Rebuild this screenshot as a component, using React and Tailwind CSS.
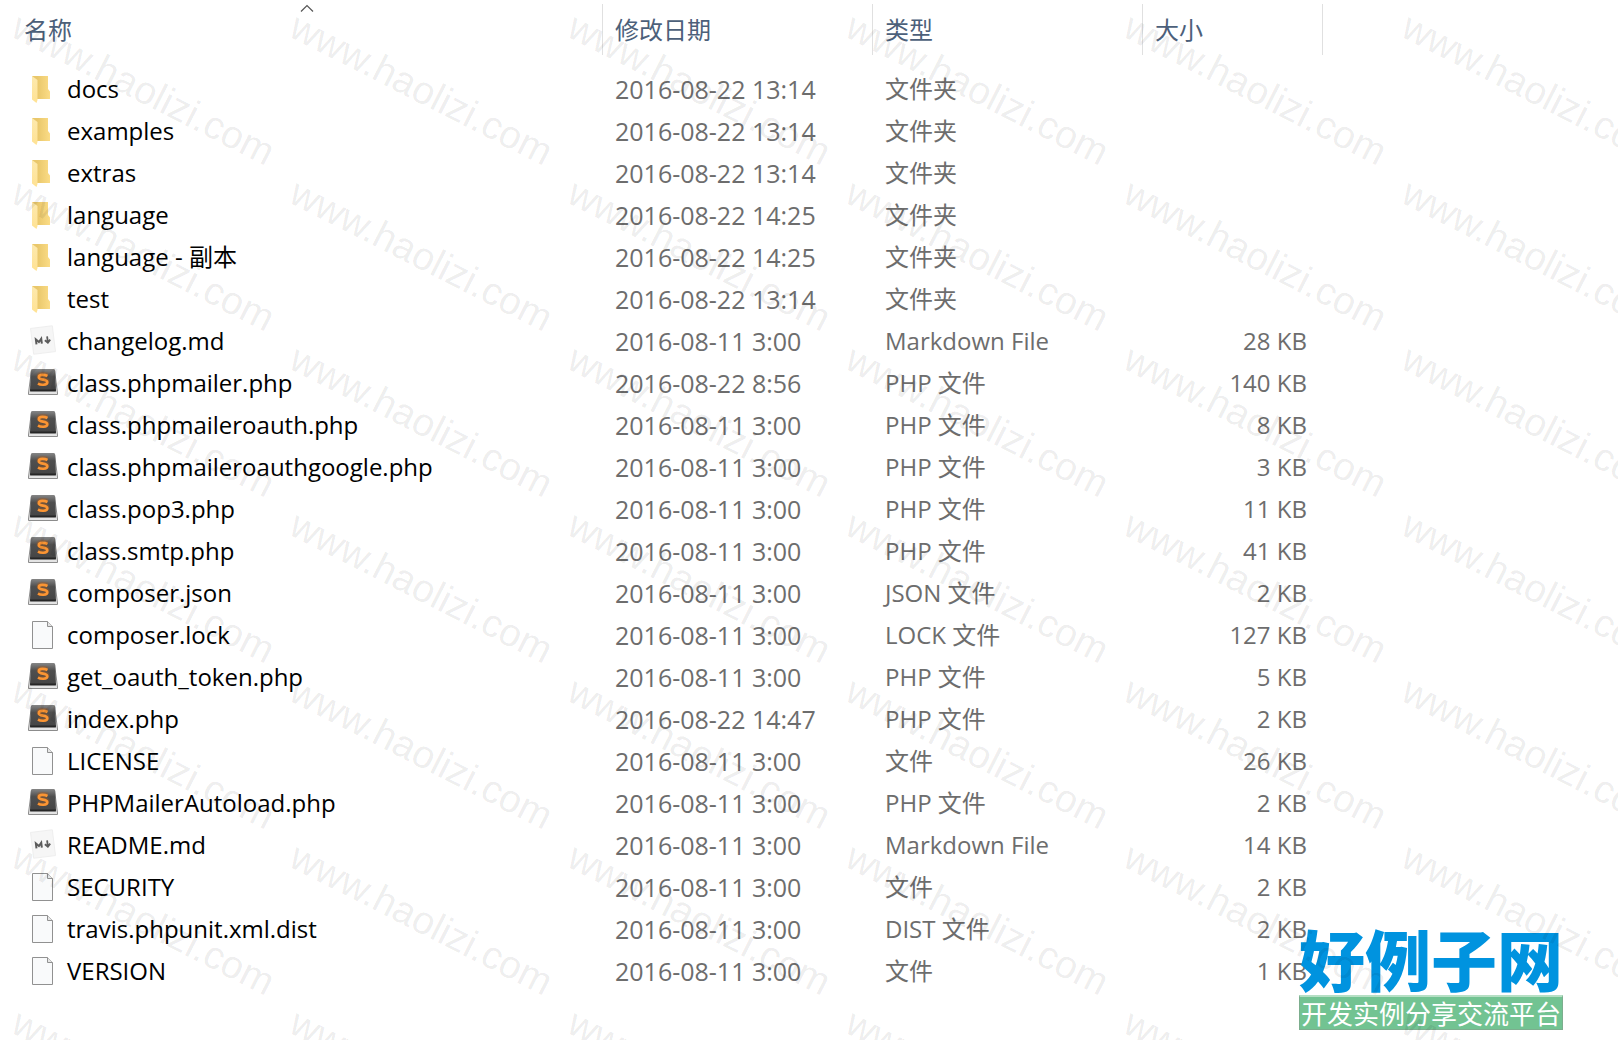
import { clsx } from 'clsx';

const files = [
    { name: 'docs', date: '2016-08-22 13:14', type: '文件夹', size: '', icon: 'folder' },
    { name: 'examples', date: '2016-08-22 13:14', type: '文件夹', size: '', icon: 'folder' },
    { name: 'extras', date: '2016-08-22 13:14', type: '文件夹', size: '', icon: 'folder' },
    { name: 'language', date: '2016-08-22 14:25', type: '文件夹', size: '', icon: 'folder' },
    { name: 'language - 副本', date: '2016-08-22 14:25', type: '文件夹', size: '', icon: 'folder' },
    { name: 'test', date: '2016-08-22 13:14', type: '文件夹', size: '', icon: 'folder' },
    { name: 'changelog.md', date: '2016-08-11 3:00', type: 'Markdown File', size: '28 KB', icon: 'markdown' },
    { name: 'class.phpmailer.php', date: '2016-08-22 8:56', type: 'PHP 文件', size: '140 KB', icon: 'sublime' },
    { name: 'class.phpmaileroauth.php', date: '2016-08-11 3:00', type: 'PHP 文件', size: '8 KB', icon: 'sublime' },
    { name: 'class.phpmaileroauthgoogle.php', date: '2016-08-11 3:00', type: 'PHP 文件', size: '3 KB', icon: 'sublime' },
    { name: 'class.pop3.php', date: '2016-08-11 3:00', type: 'PHP 文件', size: '11 KB', icon: 'sublime' },
    { name: 'class.smtp.php', date: '2016-08-11 3:00', type: 'PHP 文件', size: '41 KB', icon: 'sublime' },
    { name: 'composer.json', date: '2016-08-11 3:00', type: 'JSON 文件', size: '2 KB', icon: 'sublime' },
    { name: 'composer.lock', date: '2016-08-11 3:00', type: 'LOCK 文件', size: '127 KB', icon: 'file' },
    { name: 'get_oauth_token.php', date: '2016-08-11 3:00', type: 'PHP 文件', size: '5 KB', icon: 'sublime' },
    { name: 'index.php', date: '2016-08-22 14:47', type: 'PHP 文件', size: '2 KB', icon: 'sublime' },
    { name: 'LICENSE', date: '2016-08-11 3:00', type: '文件', size: '26 KB', icon: 'file' },
    { name: 'PHPMailerAutoload.php', date: '2016-08-11 3:00', type: 'PHP 文件', size: '2 KB', icon: 'sublime' },
    { name: 'README.md', date: '2016-08-11 3:00', type: 'Markdown File', size: '14 KB', icon: 'markdown' },
    { name: 'SECURITY', date: '2016-08-11 3:00', type: '文件', size: '2 KB', icon: 'file' },
    { name: 'travis.phpunit.xml.dist', date: '2016-08-11 3:00', type: 'DIST 文件', size: '2 KB', icon: 'file' },
    { name: 'VERSION', date: '2016-08-11 3:00', type: '文件', size: '1 KB', icon: 'file' },
];

const columns = ['名称', '修改日期', '类型', '大小'];

// --- File type icons, all on a 32x32 grid ---
const FolderIcon = () => (
    <svg viewBox="0 0 32 32" className="size-8 shrink-0" aria-hidden="true">
        <path d="M5 1H21V14L23 16.500V24H10Z" fill="url(#folder-back)" />
        <path d="M5 1L10.500 5V25L9.500 28L5 24.500Z" fill="url(#folder-front)" />
    </svg>
);

const MarkdownIcon = () => (
    <svg viewBox="0 0 32 32" className="size-8 shrink-0 overflow-visible" aria-hidden="true">
        <g transform="rotate(-7 16 13)">
            <rect x="5" y="0" width="22" height="26" fill="#f6f6f6" stroke="#ececec" strokeWidth="0.8" />
            <path d="M9 16.500V11.500L11.700 14.500L14.400 11.500V16.500" fill="none" stroke="#5c5c5c" strokeWidth="2" />
            <path d="M20.500 10V15.500M17.800 13.500L20.500 16.200L23.200 13.500" fill="none" stroke="#5c5c5c" strokeWidth="1.800" />
        </g>
    </svg>
);

const SublimeIcon = () => (
    <svg viewBox="0 0 32 32" className="size-8 shrink-0" aria-hidden="true">
        <path d="M4.500 1H27.500L30.500 24V25.500H1.500V24Z" fill="#e4e4e4" stroke="#8c8c8c" strokeWidth="1" strokeLinejoin="round" />
        <path d="M5.500 0H26.500Q28 0 28.200 2L29 21.500H3L3.800 2Q4 0 5.500 0Z" fill="url(#key-top)" />
        <path d="M3 20.500H29L28.800 22.500H3.200Z" fill="#262626" />
        <path
            d="M20.500 6C18 4.700 11.800 4 11.800 7.200C11.800 10.700 20.300 8.500 20.300 12.200C20.300 15.600 13.500 15 11 13.700"
            fill="none"
            stroke="#a8591d"
            strokeWidth="4.500"
            opacity="0.4"
        />
        <path
            d="M20.500 6C18 4.700 11.800 4 11.800 7.200C11.800 10.700 20.300 8.500 20.300 12.200C20.300 15.600 13.500 15 11 13.700"
            fill="none"
            stroke="#fb9533"
            strokeWidth="2.600"
            transform="translate(0 1)"
        />
    </svg>
);

const FileIcon = () => (
    <svg viewBox="0 0 32 32" className="size-8 shrink-0" aria-hidden="true">
        <path d="M5.500 0.500H20.500L25.500 5.500V27.500H5.500Z" fill="#f9fafb" stroke="#919191" />
        <path d="M20.500 0.500V5.500H25.500" fill="#e6e6e6" stroke="#919191" />
    </svg>
);

const icons = {
    folder: FolderIcon,
    markdown: MarkdownIcon,
    sublime: SublimeIcon,
    file: FileIcon,
};

// Gradients shared by every icon in the list
const IconDefs = () => (
    <svg className="absolute size-0" aria-hidden="true">
        <defs>
            <linearGradient id="folder-back" x1="0" y1="0" x2="1" y2="0">
                <stop offset="0.300" stopColor="#e9c76b" />
                <stop offset="1" stopColor="#fbdc86" />
            </linearGradient>
            <linearGradient id="folder-front" x1="0" y1="0" x2="0" y2="1">
                <stop offset="0" stopColor="#fde9ae" />
                <stop offset="1" stopColor="#ffe293" />
            </linearGradient>
            <linearGradient id="key-top" x1="0" y1="0" x2="0" y2="1">
                <stop offset="0" stopColor="#868686" />
                <stop offset="0.350" stopColor="#4f4f4f" />
                <stop offset="1" stopColor="#454545" />
            </linearGradient>
        </defs>
    </svg>
);

const FileRow = ({ file }) => {
    const Icon = icons[file.icon];

    return (
        <tr className="h-[42px] align-top leading-10 text-[#6d6d6d]">
            <td className="p-0">
                <div className="flex gap-2 pl-[27px] text-black">
                    <span className="pt-[6px]">
                        <Icon />
                    </span>
                    <span>{file.name}</span>
                </div>
            </td>
            <td className="p-0 pl-[13px] text-[25px]">{file.date}</td>
            <td className="p-0 pl-[13px]">{file.type}</td>
            <td className="p-0 pr-4 text-right">{file.size}</td>
            <td className="p-0"></td>
        </tr>
    );
};

const Watermark = () => (
    <div
        aria-hidden="true"
        className="pointer-events-none absolute inset-0 grid auto-rows-[166px] grid-cols-[repeat(6,278px)] overflow-hidden font-['Liberation_Sans'] text-[39px] leading-10 text-black/8"
    >
        {Array.from({ length: 42 }, (_, i) => (
            <div key={i} className="pt-[6px] pl-6">
                <span className="block w-max origin-top-left rotate-27">www.haolizi.com</span>
            </div>
        ))}
    </div>
);

const SiteLogo = () => (
    <div className="absolute right-[55px] bottom-[10px] w-[264px] font-['Noto_Sans_CJK_SC',sans-serif]">
        <p className="text-[66px] leading-[76px] font-black whitespace-nowrap text-[#0093df]">好例子网</p>
        <p className="h-[35px] border border-t-2 border-[#7cae8e] border-t-[#b5dfc4] bg-[#72c392] text-center text-[26px] leading-8 whitespace-nowrap text-white">
            开发实例分享交流平台
        </p>
    </div>
);

export default function App() {
    return (
        <main className="relative min-h-screen overflow-hidden bg-white font-['Open_Sans','Noto_Sans_CJK_SC',sans-serif] text-[24px] leading-8">
            <IconDefs />
            <table className="w-full table-fixed border-collapse">
                <colgroup>
                    <col className="w-[602px]" />
                    <col className="w-[270px]" />
                    <col className="w-[270px]" />
                    <col className="w-[181px]" />
                    <col />
                </colgroup>
                <thead>
                    <tr className="h-[69px] align-top">
                        {columns.map((label, index) => (
                            <th key={label} scope="col" className="relative p-0 pt-1 text-left font-normal">
                                <button
                                    type="button"
                                    className={clsx(
                                        'flex h-[51px] w-full items-center pt-px text-[#4c607a]',
                                        index === 0 ? 'pl-6' : 'border-l border-[#e0e0e0] pl-3',
                                        index === columns.length - 1 && 'border-r'
                                    )}
                                >
                                    {label}
                                </button>
                                {index === 0 && (
                                    <svg viewBox="0 0 14 8" className="absolute top-1 left-[300px] h-2 w-[14px]" aria-hidden="true">
                                        <path d="M1 7.500L7 1.500L13 7.500" fill="none" stroke="#555555" strokeWidth="1.200" />
                                    </svg>
                                )}
                            </th>
                        ))}
                        <td></td>
                    </tr>
                </thead>
                <tbody>
                    {files.map((file) => (
                        <FileRow key={file.name} file={file} />
                    ))}
                </tbody>
            </table>
            <SiteLogo />
            <Watermark />
        </main>
    );
}
